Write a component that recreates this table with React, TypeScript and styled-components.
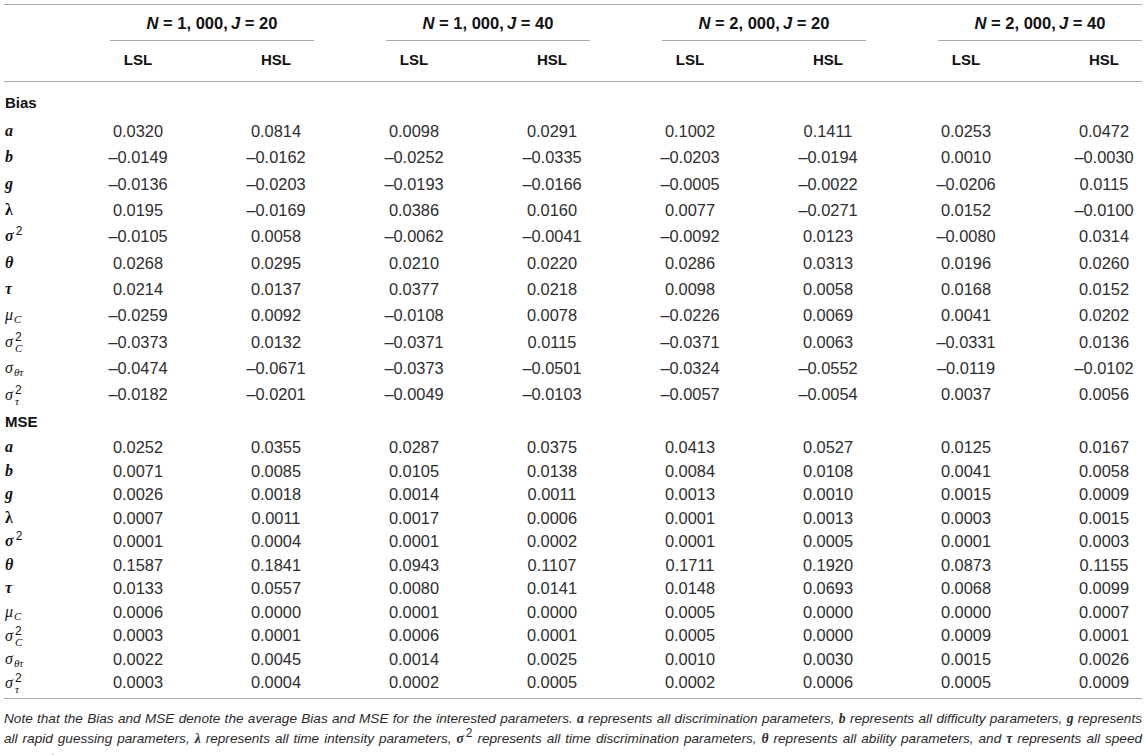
import React from "react";
import styled, { createGlobalStyle } from "styled-components";

const Global = createGlobalStyle`
  html, body { margin: 0; padding: 0; background: #fff; }
  body { font-family: "Liberation Sans", Arial, sans-serif; color: #1e1e1e; }
`;

const LINE = "#a9a9a9";

const Wrap = styled.div`
  width: 1138px;
  padding: 4px 0 0 4px;
`;

const Table = styled.div`
  border-top: 1px solid ${LINE};
  border-bottom: 1px solid ${LINE};
  padding-bottom: 4px;
`;

const GroupRow = styled.div`
  display: grid;
  grid-template-columns: 34px repeat(4, 276px);
`;

const GroupHead = styled.div`
  margin-left: 72px;
  height: 36px;
  border-bottom: 1px solid ${LINE};
  display: flex;
  align-items: center;
  justify-content: center;
  font-size: 16.5px;
  font-weight: 700;
  color: #111;
  padding-top: 1px;
  box-sizing: border-box;
  white-space: nowrap;
`;

const HeadRow = styled.div`
  display: grid;
  grid-template-columns: 34px repeat(8, 138px);
  height: 40px;
  border-bottom: 1px solid ${LINE};
`;

const SubHead = styled.div`
  padding-left: 62px;
  padding-bottom: 4px;
  display: flex;
  align-items: center;
  justify-content: center;
  font-size: 15px;
  font-weight: 700;
  color: #111;
`;

const Section = styled.div<{ $h: number; $top: number }>`
  height: ${(p) => p.$h}px;
  box-sizing: border-box;
  padding: ${(p) => p.$top}px 0 0 1px;
  font-size: 15px;
  line-height: 18px;
  font-weight: 700;
  color: #111;
`;

const Row = styled.div<{ $h: number }>`
  display: grid;
  grid-template-columns: 34px repeat(8, 138px);
  height: ${(p) => p.$h}px;
  align-items: center;
`;

const Label = styled.div`
  padding-left: 1px;
  white-space: nowrap;
  font-family: "Liberation Serif", "DejaVu Serif", serif;
  font-size: 16px;
  line-height: 18px;
  color: #111;
`;

const Cell = styled.div`
  padding-left: 62px;
  text-align: center;
  font-size: 16.4px;
  line-height: 18px;
  color: #2e2e2e;
  white-space: nowrap;
`;

const BoldIt = styled.span`
  font-family: "Liberation Serif", "DejaVu Serif", serif;
  font-weight: 700;
  font-style: italic;
`;

const BoldUp = styled.span`
  font-family: "Liberation Serif", "DejaVu Serif", serif;
  font-weight: 700;
`;

const MathIt = styled.span`
  font-family: "Liberation Serif", "DejaVu Serif", serif;
  font-style: italic;
`;

const Sup = styled.sup`
  font-family: "Liberation Sans", Arial, sans-serif;
  font-weight: 400;
  font-style: normal;
  font-size: 12px;
  vertical-align: 6px;
  line-height: 0;
  margin-left: 2px;
`;

const Sub = styled.sub`
  font-family: "Liberation Serif", serif;
  font-style: italic;
  font-size: 11px;
  vertical-align: -3px;
  line-height: 0;
  margin-left: 1px;
`;

const Stack = styled.span`
  display: inline-flex;
  flex-direction: column;
  align-items: flex-start;
  vertical-align: 6px;
  margin-left: 2px;
  line-height: 10px;
  height: 10px;
  font-size: 11px;
`;

const StackTop = styled.span`
  font-family: "Liberation Sans", Arial, sans-serif;
  font-style: normal;
  font-size: 12px;
`;

const StackBot = styled.span`
  font-family: "Liberation Serif", serif;
  font-style: italic;
  margin-top: 1px;
`;

const HeadMath = styled.span`
  font-style: italic;
`;

const Note = styled.p`
  margin: 10px 0 0 0;
  font-size: 13.6px;
  line-height: 20px;
  font-style: italic;
  color: #2a2a2a;
  text-align: justify;
`;

const labels: React.ReactNode[] = [
  <BoldIt>a</BoldIt>,
  <BoldIt>b</BoldIt>,
  <BoldIt>g</BoldIt>,
  <BoldUp>λ</BoldUp>,
  <>
    <BoldIt>σ</BoldIt>
    <Sup>2</Sup>
  </>,
  <BoldIt>θ</BoldIt>,
  <BoldIt>τ</BoldIt>,
  <>
    <MathIt>μ</MathIt>
    <Sub>C</Sub>
  </>,
  <>
    <MathIt>σ</MathIt>
    <Stack>
      <StackTop>2</StackTop>
      <StackBot>C</StackBot>
    </Stack>
  </>,
  <>
    <MathIt>σ</MathIt>
    <Sub>θτ</Sub>
  </>,
  <>
    <MathIt>σ</MathIt>
    <Stack>
      <StackTop>2</StackTop>
      <StackBot>τ</StackBot>
    </Stack>
  </>,
];

const bias = [
  "0.0320 0.0814 0.0098 0.0291 0.1002 0.1411 0.0253 0.0472",
  "–0.0149 –0.0162 –0.0252 –0.0335 –0.0203 –0.0194 0.0010 –0.0030",
  "–0.0136 –0.0203 –0.0193 –0.0166 –0.0005 –0.0022 –0.0206 0.0115",
  "0.0195 –0.0169 0.0386 0.0160 0.0077 –0.0271 0.0152 –0.0100",
  "–0.0105 0.0058 –0.0062 –0.0041 –0.0092 0.0123 –0.0080 0.0314",
  "0.0268 0.0295 0.0210 0.0220 0.0286 0.0313 0.0196 0.0260",
  "0.0214 0.0137 0.0377 0.0218 0.0098 0.0058 0.0168 0.0152",
  "–0.0259 0.0092 –0.0108 0.0078 –0.0226 0.0069 0.0041 0.0202",
  "–0.0373 0.0132 –0.0371 0.0115 –0.0371 0.0063 –0.0331 0.0136",
  "–0.0474 –0.0671 –0.0373 –0.0501 –0.0324 –0.0552 –0.0119 –0.0102",
  "–0.0182 –0.0201 –0.0049 –0.0103 –0.0057 –0.0054 0.0037 0.0056",
];

const mse = [
  "0.0252 0.0355 0.0287 0.0375 0.0413 0.0527 0.0125 0.0167",
  "0.0071 0.0085 0.0105 0.0138 0.0084 0.0108 0.0041 0.0058",
  "0.0026 0.0018 0.0014 0.0011 0.0013 0.0010 0.0015 0.0009",
  "0.0007 0.0011 0.0017 0.0006 0.0001 0.0013 0.0003 0.0015",
  "0.0001 0.0004 0.0001 0.0002 0.0001 0.0005 0.0001 0.0003",
  "0.1587 0.1841 0.0943 0.1107 0.1711 0.1920 0.0873 0.1155",
  "0.0133 0.0557 0.0080 0.0141 0.0148 0.0693 0.0068 0.0099",
  "0.0006 0.0000 0.0001 0.0000 0.0005 0.0000 0.0000 0.0007",
  "0.0003 0.0001 0.0006 0.0001 0.0005 0.0000 0.0009 0.0001",
  "0.0022 0.0045 0.0014 0.0025 0.0010 0.0030 0.0015 0.0026",
  "0.0003 0.0004 0.0002 0.0005 0.0002 0.0006 0.0005 0.0009",
];

const groups = [
  ["1, 000", "20"],
  ["1, 000", "40"],
  ["2, 000", "20"],
  ["2, 000", "40"],
];

function Rows({ data, h }: { data: string[]; h: number }) {
  return (
    <>
      {data.map((line, i) => (
        <Row key={i} $h={h}>
          <Label>{labels[i]}</Label>
          {line.split(" ").map((v, j) => (
            <Cell key={j}>{v}</Cell>
          ))}
        </Row>
      ))}
    </>
  );
}

export default function App() {
  return (
    <Wrap>
      <Global />
      <Table>
        <GroupRow>
          <div />
          {groups.map(([n, j], i) => (
            <GroupHead key={i}>
              <HeadMath>N</HeadMath>&nbsp;=&nbsp;{n},<HeadMath>&thinsp;J</HeadMath>&nbsp;=&nbsp;{j}
            </GroupHead>
          ))}
        </GroupRow>
        <HeadRow>
          <div />
          {Array.from({ length: 8 }).map((_, i) => (
            <SubHead key={i}>{i % 2 === 0 ? "LSL" : "HSL"}</SubHead>
          ))}
        </HeadRow>
        <Section $h={36} $top={12}>Bias</Section>
        <Rows data={bias} h={26.3} />
        <Section $h={28} $top={6}>MSE</Section>
        <Rows data={mse} h={23.5} />
      </Table>
      <Note>
        Note that the Bias and MSE denote the average Bias and MSE for the interested parameters.{" "}
        <BoldIt>a</BoldIt> represents all discrimination parameters, <BoldIt>b</BoldIt> represents all
        difficulty parameters, <BoldIt>g</BoldIt> represents all rapid guessing parameters,{" "}
        <BoldUp>λ</BoldUp> represents all time intensity parameters, <BoldIt>σ</BoldIt>
        <Sup>2</Sup> represents all time discrimination parameters, <BoldIt>θ</BoldIt> represents all
        ability parameters, and <BoldIt>τ</BoldIt> represents all speed parameters.
      </Note>
    </Wrap>
  );
}
